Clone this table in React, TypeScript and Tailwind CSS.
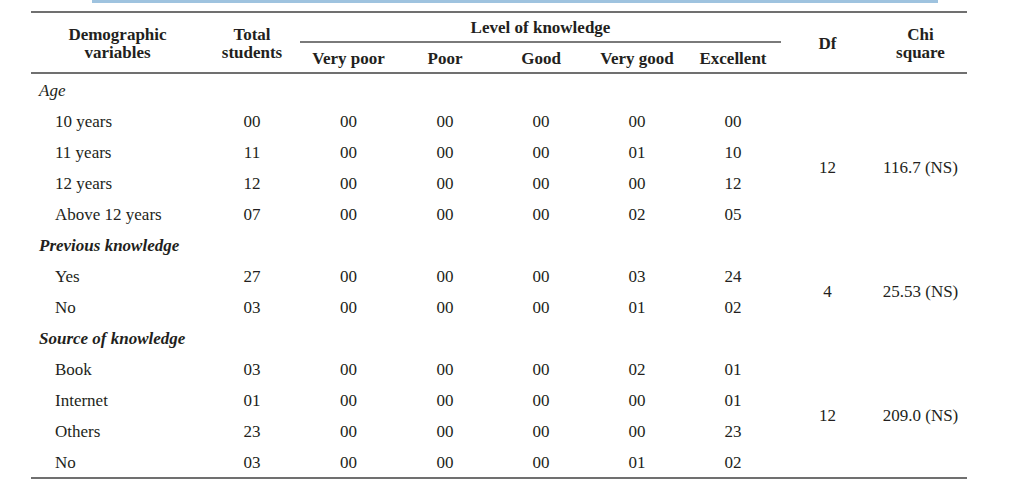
import React from "react";

const font = { fontFamily: '"Liberation Serif", "Times New Roman", serif' };

type Row = { label: string; vals: string[] };

const groups: { title: string; bold: boolean; rows: Row[]; df: string; chi: string; start: string; span: string }[] = [
  {
    title: "Age",
    bold: false,
    rows: [
      { label: "10 years", vals: ["00", "00", "00", "00", "00", "00"] },
      { label: "11 years", vals: ["11", "00", "00", "00", "01", "10"] },
      { label: "12 years", vals: ["12", "00", "00", "00", "00", "12"] },
      { label: "Above 12 years", vals: ["07", "00", "00", "00", "02", "05"] },
    ],
    df: "12",
    chi: "116.7 (NS)",
    start: "row-start-2",
    span: "row-span-4",
  },
  {
    title: "Previous knowledge",
    bold: true,
    rows: [
      { label: "Yes", vals: ["27", "00", "00", "00", "03", "24"] },
      { label: "No", vals: ["03", "00", "00", "00", "01", "02"] },
    ],
    df: "4",
    chi: "25.53 (NS)",
    start: "row-start-7",
    span: "row-span-2",
  },
  {
    title: "Source of knowledge",
    bold: true,
    rows: [
      { label: "Book", vals: ["03", "00", "00", "00", "02", "01"] },
      { label: "Internet", vals: ["01", "00", "00", "00", "00", "01"] },
      { label: "Others", vals: ["23", "00", "00", "00", "00", "23"] },
      { label: "No", vals: ["03", "00", "00", "00", "01", "02"] },
    ],
    df: "12",
    chi: "209.0 (NS)",
    start: "row-start-10",
    span: "row-span-4",
  },
];

const cols = "grid grid-cols-[173px_96px_97px_96px_96px_96px_96px_93px_93px]";

export default function App() {
  return (
    <div className="w-[1015px] h-[495px] bg-white overflow-hidden text-[#231f20] text-[17px]" style={font}>
      <div className="ml-[92px] w-[846px] h-[3px] bg-[#9fc3df]" />
      <div className="ml-[31px] mt-[8px] w-[936px]">
        <div className="h-[2px] bg-[#707070]" />
        {/* header */}
        <div className={`${cols} grid-rows-[28px_2px_29px] font-bold leading-[18px]`}>
          <div className="row-span-3 col-start-1 row-start-1 flex items-center justify-center text-center pt-[2px]">
            Demographic
            <br />
            variables
          </div>
          <div className="row-span-3 col-start-2 row-start-1 flex items-center justify-center text-center pt-[2px]">
            Total
            <br />
            students
          </div>
          <div className="col-start-3 col-span-5 row-start-1 flex items-center justify-center pt-[2px]">Level of knowledge</div>
          <div className="col-start-3 col-span-5 row-start-2 bg-[#7a7a7a]" />
          <div className="col-start-3 row-start-3 flex items-center justify-center pt-[2px]">Very poor</div>
          <div className="col-start-4 row-start-3 flex items-center justify-center pt-[2px]">Poor</div>
          <div className="col-start-5 row-start-3 flex items-center justify-center pt-[2px]">Good</div>
          <div className="col-start-6 row-start-3 flex items-center justify-center pt-[2px]">Very good</div>
          <div className="col-start-7 row-start-3 flex items-center justify-center pt-[2px]">Excellent</div>
          <div className="row-span-3 col-start-8 row-start-1 flex items-center justify-center pt-[2px]">Df</div>
          <div className="row-span-3 col-start-9 row-start-1 flex items-center justify-center text-center pt-[2px]">
            Chi
            <br />
            square
          </div>
        </div>
        <div className="h-[2px] bg-[#707070]" />
        {/* body */}
        <div className={`${cols} grid-rows-[repeat(13,31px)]`}>
          {groups.map((g) => (
            <React.Fragment key={g.title + "s"}>
              <div className={`col-start-8 ${g.start} ${g.span} flex items-center justify-center pt-[2px]`}>{g.df}</div>
              <div className={`col-start-9 ${g.start} ${g.span} flex items-center justify-center pt-[2px]`}>{g.chi}</div>
            </React.Fragment>
          ))}
          {groups.map((g) => (
            <React.Fragment key={g.title}>
              <div className={`col-span-9 flex items-center pl-[8px] pt-[2px] italic ${g.bold ? "font-bold" : ""}`}>{g.title}</div>
              {g.rows.map((r, i) => (
                <React.Fragment key={i}>
                  <div className="flex items-center pl-[24px] pt-[2px]">{r.label}</div>
                  {r.vals.map((v, j) => (
                    <div key={j} className="flex items-center justify-center pt-[2px]">
                      {v}
                    </div>
                  ))}
                </React.Fragment>
              ))}
            </React.Fragment>
          ))}
        </div>
        <div className="h-[2px] bg-[#707070]" />
      </div>
    </div>
  );
}
